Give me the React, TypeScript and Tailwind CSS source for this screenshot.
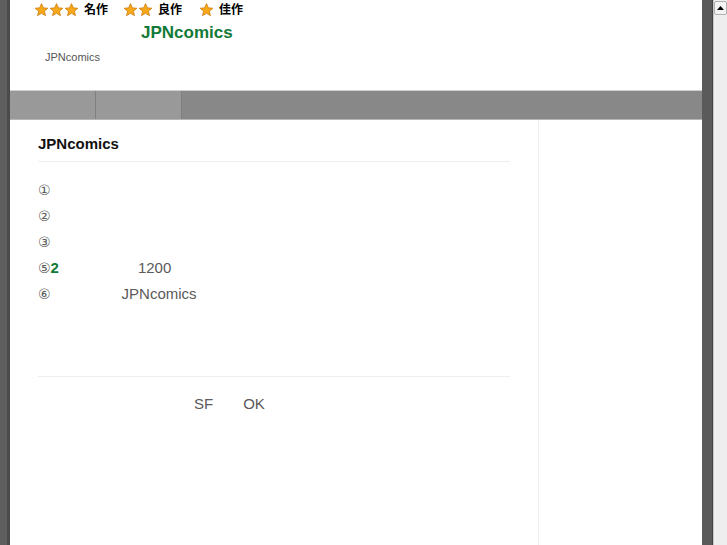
// App.tsx — static recreation of the JPNcomics page frame.
const FONT = "font-['Liberation_Sans','DejaVu_Sans','Noto_Sans_CJK_JP',sans-serif]";

function Star() {
  return (
    <svg width="15" height="14" viewBox="0 0 24 23" aria-hidden="true">
      <path
        d="M12 1l3.1 7 7.4.6-5.6 4.9 1.7 7.4L12 17l-6.6 3.9 1.7-7.4L1.5 8.6 8.9 8z"
        fill="#f7a81b"
        stroke="#c9790a"
        strokeWidth="1.2"
        strokeLinejoin="round"
      />
    </svg>
  );
}

function Rating({ stars, label, className }: { stars: number; label: string; className?: string }) {
  return (
    <span className={`flex items-center ${className ?? ''}`}>
      {Array.from({ length: stars }).map((_, i) => (
        <Star key={i} />
      ))}
      <span className="ml-[5px] text-[12px] font-bold leading-none text-black">{label}</span>
    </span>
  );
}

const ROWS = [
  { mark: '①' },
  { mark: '②' },
  { mark: '③' },
  { mark: '⑤', extra: '2', pad: 'w-[79px]', text: '1200' },
  { mark: '⑥', pad: 'w-[71px]', text: 'JPNcomics' },
];

export default function App() {
  return (
    <div className={`flex h-[545px] w-[727px] overflow-hidden bg-white ${FONT}`}>
      {/* left frame */}
      <div className="w-[7px] shrink-0 bg-[#5e5e5e]" />
      <div className="w-[3px] shrink-0 bg-[#4b4b4b]" />

      <div className="flex w-[692px] shrink-0 flex-col bg-white">
        <header className="h-[90px] shrink-0">
          <div className="flex h-[19px] items-center pl-[24px]">
            <Rating stars={3} label="名作" />
            <Rating stars={2} label="良作" className="ml-[15px]" />
            <Rating stars={1} label="佳作" className="ml-[17px]" />
          </div>
          <div className="mt-[1px] pl-[131px] text-[17px] font-bold leading-[26px] text-[#117a36]">JPNcomics</div>
          <div className="mt-[3px] pl-[35px] text-[11px] leading-[16px] text-[#555]">JPNcomics</div>
        </header>

        <nav className="flex h-[30px] shrink-0 border-t border-b border-t-[#cfcfcf] border-b-[#b5b5b5] bg-[#888]">
          <div className="w-[86px] border-r border-[#7f7f7f] bg-[#999]" />
          <div className="w-[86px] border-r border-[#7f7f7f] bg-[#999]" />
        </nav>

        <div className="flex flex-1">
          <main className="w-[529px] shrink-0 border-r border-[#eeeeee] px-[28px]">
            <h2 className="mt-[14px] border-b border-[#eeeeee] pb-[7px] text-[15px] font-bold leading-[20px] text-[#111]">
              JPNcomics
            </h2>
            <ul className="mt-[15px] text-[15px] leading-[26px] text-[#5a5a5a]">
              {ROWS.map((row) => (
                <li key={row.mark} className="flex items-center">
                  <span className="text-[14px]">{row.mark}</span>
                  {row.extra && <span className="font-bold text-[#117a36]">{row.extra}</span>}
                  {row.pad && <span className={`inline-block ${row.pad}`} />}
                  {row.text && <span>{row.text}</span>}
                </li>
              ))}
            </ul>
            <div className="mt-[69px] border-t border-[#eeeeee]" />
            <div className="mt-[14px] flex pl-[156px] text-[15px] leading-[26px] text-[#5a5a5a]">
              <span>SF</span>
              <span className="ml-[30px]">OK</span>
            </div>
          </main>
          <aside className="flex-1" />
        </div>
      </div>

      {/* right frame + scrollbar */}
      <div className="w-[10px] shrink-0 bg-[#5a5a5a]" />
      <div className="w-[1px] shrink-0 bg-[#444]" />
      <div className="flex w-[14px] shrink-0 flex-col border-l border-[#c8c8c8] bg-[#eeeeee]">
        <div className="mt-[1px] flex h-[14px] items-center justify-center rounded-[2px] border border-[#b0b0b0] bg-[#f4f4f4]">
          <svg width="7" height="4" viewBox="0 0 7 4" aria-hidden="true">
            <path d="M3.5 0L7 4H0z" fill="#000" />
          </svg>
        </div>
      </div>
    </div>
  );
}
